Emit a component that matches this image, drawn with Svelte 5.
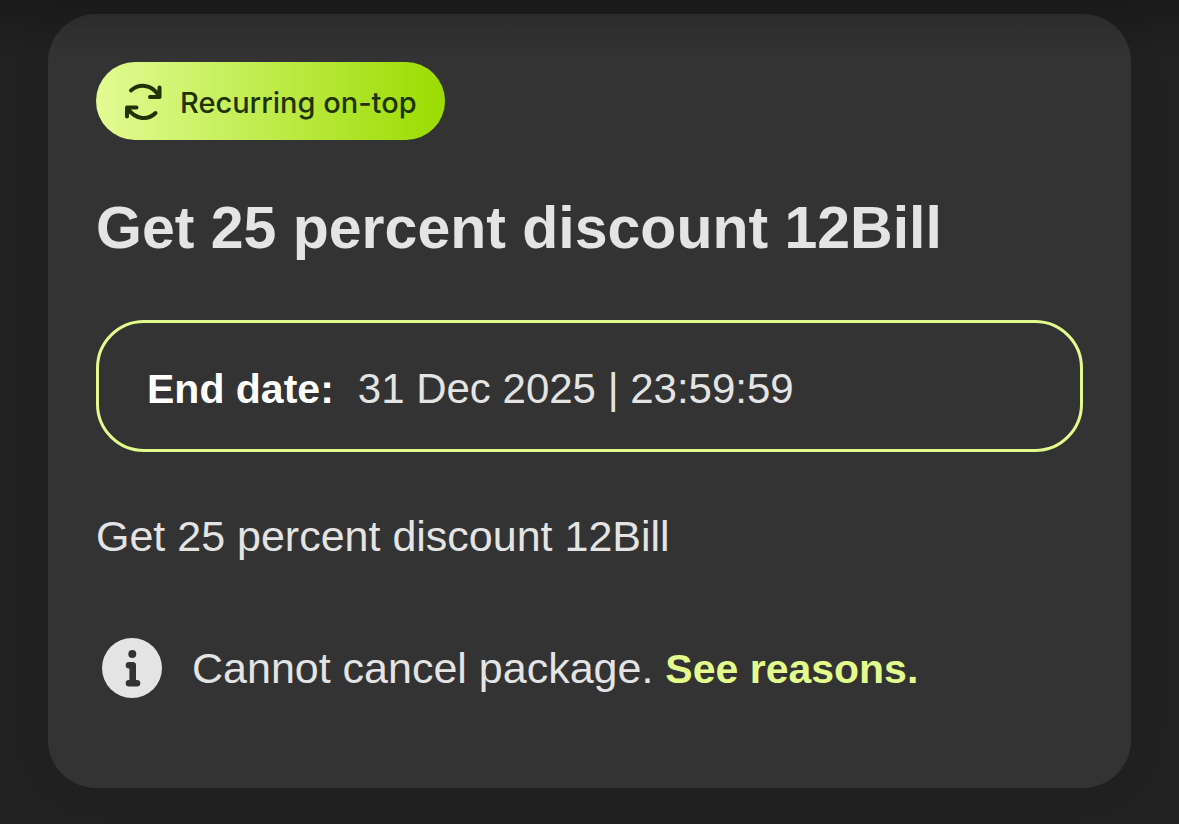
<script lang="ts">
	export let badge = 'Recurring on-top';
	export let title = 'Get 25 percent discount 12Bill';
	export let description = 'Get 25 percent discount 12Bill';
	export let endDate = '31 Dec 2025 | 23:59:59';
	export let reasonsHref = '#reasons';
</script>

<main class="page">
	<article class="card">
		<div class="badge">
			<svg class="badge-icon" viewBox="0 0 38 38" aria-hidden="true">
				<path d="M7 7.500C15 .500 27 1 34.500 12" />
				<path d="M35.500 4.500V14H26" />
				<path d="M31.500 30C24 37.500 12 37 4 26" />
				<path d="M3 33.500V24.500H12.500" />
			</svg>
			<span>{badge}</span>
		</div>

		<h1>{title}</h1>

		<div class="end-date">
			<strong>End date:</strong>
			<time datetime="2025-12-31T23:59:59">{endDate}</time>
		</div>

		<p class="description">{description}</p>

		<div class="notice">
			<svg class="notice-icon" viewBox="0 0 60 60" aria-hidden="true">
				<circle cx="30" cy="30" r="30" fill="#e4e4e4" />
				<circle cx="30.300" cy="16" r="4" fill="#333333" />
				<path
					d="M27 27.200h3.700V45.200M27 45.200h8"
					fill="none"
					stroke="#333333"
					stroke-width="6.600"
					stroke-linecap="round"
					stroke-linejoin="round"
				/>
			</svg>
			<p>Cannot cancel package. <a href={reasonsHref}>See reasons.</a></p>
		</div>
	</article>
</main>

<style>
	:global(body) {
		background: #212121;
	}

	.page {
		position: relative;
		padding: 14px 48px 36px;
		font-family: 'Liberation Sans', Arial, sans-serif;
		color: #e4e4e4;
	}

	/* shadow cast by the bar above the list */
	.page::before {
		content: '';
		position: absolute;
		inset: 0 0 auto;
		height: 56px;
		background: linear-gradient(rgba(0, 0, 0, 0.2), rgba(0, 0, 0, 0));
		pointer-events: none;
	}

	.card {
		display: flex;
		flex-direction: column;
		align-items: flex-start;
		padding: 48px 48px 90px;
		border-radius: 48px;
		background: #333333;
		box-shadow: 0 0 48px rgba(0, 0, 0, 0.04);
	}

	.badge {
		display: flex;
		align-items: center;
		gap: 18px;
		height: 78px;
		padding: 2px 28px 0;
		border-radius: 39px;
		background: linear-gradient(90deg, #e2fb94, #9bdc00);
		color: #1f3300;
		font-family: Inter, 'Liberation Sans', sans-serif;
		font-size: 29px;
		font-weight: 500;
		box-sizing: border-box;
	}

	.badge-icon {
		width: 38px;
		height: 38px;
		overflow: visible;
		fill: none;
		stroke: #1f3300;
		stroke-width: 4;
		stroke-linecap: round;
		stroke-linejoin: round;
	}

	h1 {
		margin: 52px 0 0;
		font-size: 59px;
		font-weight: 700;
		line-height: 72px;
	}

	.end-date {
		display: flex;
		align-items: center;
		align-self: stretch;
		gap: 24px;
		margin-top: 56px;
		padding: 39px 48px 33px;
		border: 3px solid #e2fb8c;
		border-radius: 48px;
		font-size: 42px;
		line-height: 54px;
	}

	.end-date strong {
		color: #ffffff;
		font-size: 41px;
	}

	.description {
		margin: 57px 0 0;
		font-size: 43px;
		line-height: 54px;
	}

	.notice {
		display: flex;
		align-items: center;
		gap: 30px;
		margin-top: 75px;
		padding-left: 6px;
		font-size: 43px;
		line-height: 54px;
	}

	.notice-icon {
		flex: none;
		width: 60px;
		height: 60px;
	}

	.notice p {
		margin: 0;
	}

	.notice a {
		color: #e2fb8c;
		font-size: 41px;
		font-weight: 700;
		text-decoration: none;
	}
</style>
